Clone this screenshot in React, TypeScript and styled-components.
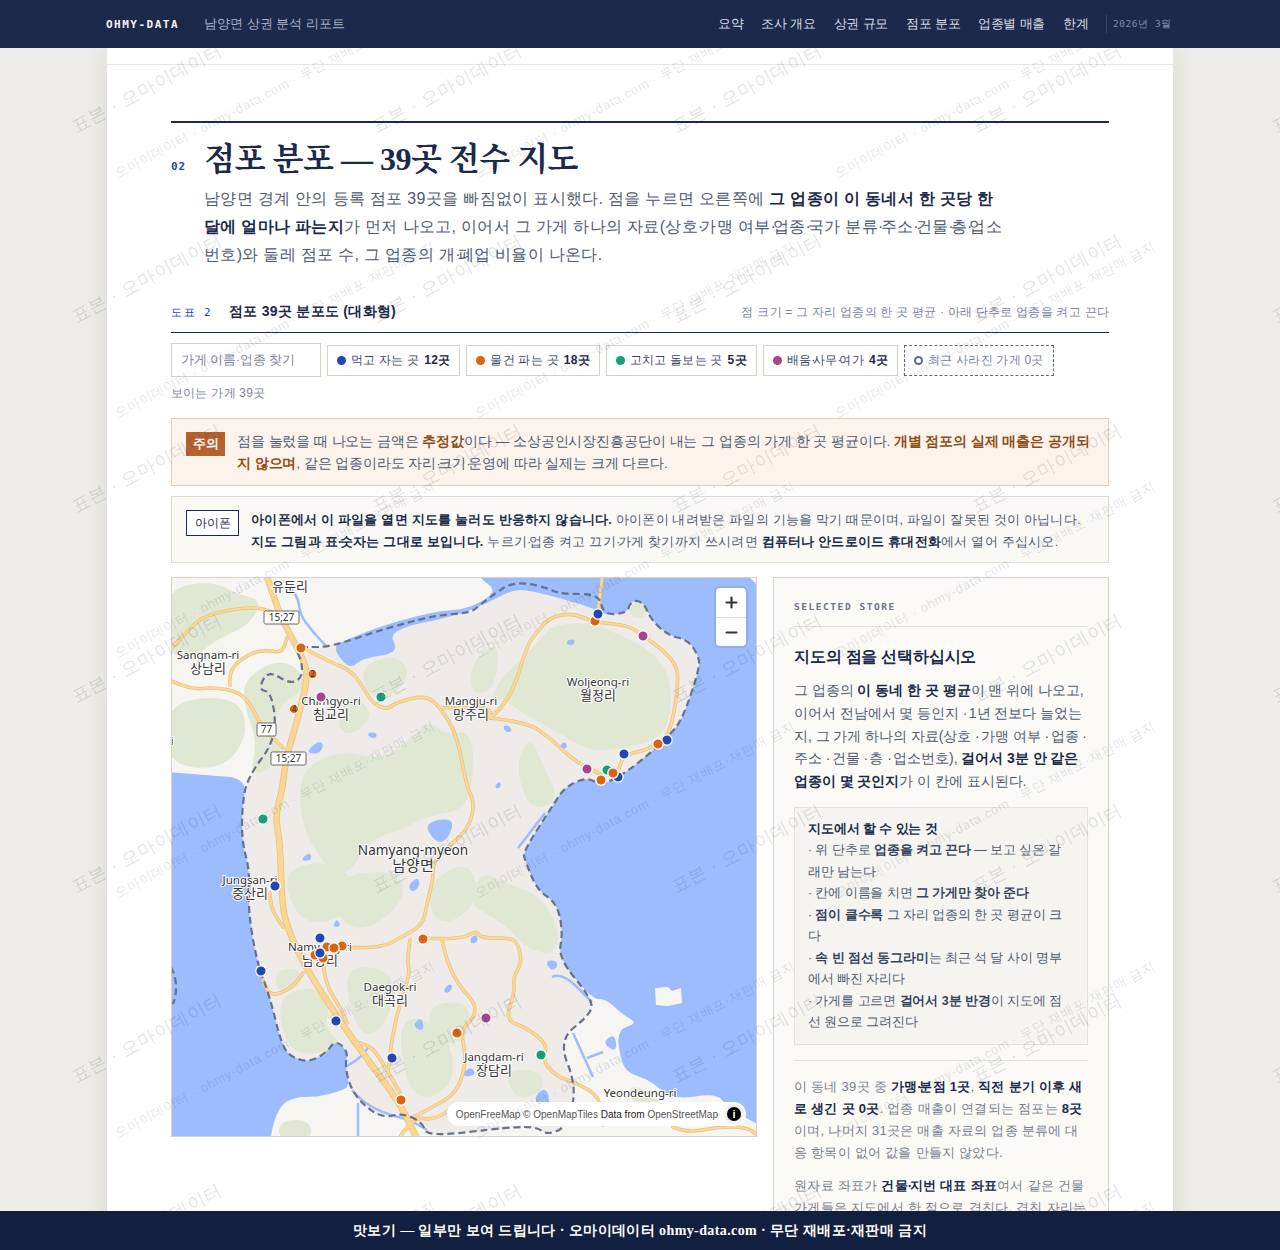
import React from "react";
import styled, { createGlobalStyle } from "styled-components";
import { Minus, Plus } from "lucide-react";

const SANS = `"Liberation Sans", sans-serif`;
const TITLE_SERIF = `"Liberation Serif", "Noto Serif CJK KR", serif`;
const SERIF = `"Liberation Serif", serif`;
const MONO = `"DejaVu Sans Mono", monospace`;
const NAVY = "#1b2a4a";

const GlobalStyle = createGlobalStyle`
  html, body {
    margin: 0;
    height: 100%;
    overflow: hidden;
    background: #eeede8;
  }
  * { box-sizing: border-box; }
`;

const Page = styled.div`
  height: 100vh;
  display: flex;
  flex-direction: column;
  font-family: ${SANS};
  color: #4a5568;
`;

const TopBar = styled.header`
  flex: none;
  height: 48px;
  padding: 0 108px 0 106px;
  display: flex;
  align-items: center;
  justify-content: space-between;
  background: ${NAVY};
`;

const Brand = styled.div`
  display: flex;
  align-items: center;
  gap: 25px;
`;

const Logo = styled.span`
  font-family: ${MONO};
  font-size: 11px;
  font-weight: 700;
  letter-spacing: 1.5px;
  color: #f4f4f0;
`;

const ReportName = styled.span`
  font-size: 13px;
  color: #a9b2c3;
`;

const Nav = styled.nav`
  display: flex;
  align-items: center;
  gap: 17.5px;
`;

const NavLink = styled.a`
  font-size: 13px;
  letter-spacing: -0.2px;
  color: #d9dde5;
`;

const IssueDate = styled.span`
  padding-left: 6px;
  height: 18px;
  line-height: 18px;
  border-left: 1px solid #3a4867;
  font-family: ${MONO};
  font-size: 9.5px;
  letter-spacing: 0.6px;
  color: #7f8ba3;
`;

const BottomBar = styled.footer`
  flex: none;
  height: 39px;
  display: flex;
  align-items: center;
  justify-content: center;
  background: #12203f;
  color: #fff;
  font-family: ${SERIF};
  font-size: 14px;
  letter-spacing: 0.4px;
  font-weight: 700;
`;

const Main = styled.main`
  flex: 1;
  min-height: 0;
  position: relative;
  overflow: hidden;
`;

const Sheet = styled.div`
  width: 1066px;
  margin: 0 auto;
  background: #fff;
  box-shadow: 0 0 24px rgba(30, 30, 20, 0.1);
`;

const PrevSectionEnd = styled.div`
  height: 17px;
  border-bottom: 1px solid #e8e4dc;
`;

const Section = styled.section`
  margin: 56px 64px 0;
  padding-top: 14px;
  border-top: 2px solid ${NAVY};
`;

const SectionHead = styled.div`
  display: flex;
  align-items: baseline;
  gap: 18px;
`;

const SectionNo = styled.span`
  font-family: ${MONO};
  font-size: 11px;
  font-weight: 700;
  letter-spacing: 1px;
  color: #2148b0;
`;

const Title = styled.h2`
  margin: 0;
  font-family: ${TITLE_SERIF};
  font-size: 32px;
  letter-spacing: -0.5px;
  line-height: 44px;
  font-weight: 700;
  color: ${NAVY};
`;

const Lead = styled.p`
  margin: 4px 0 0 33px;
  max-width: 800px;
  font-size: 16px;
  letter-spacing: 0.02em;
  line-height: 28px;
  color: #4f5a70;

  strong {
    color: ${NAVY};
  }
`;

// the middle dot sets narrower than Liberation Sans gives it
const Mid = styled.span`
  letter-spacing: -0.18em;
`;

const dotted = (s: string) =>
  s.split("·").map((part, i) => (
    <React.Fragment key={i}>
      {i > 0 && <Mid>·</Mid>}
      {part}
    </React.Fragment>
  ));

const FigureHead = styled.div`
  margin-top: 34px;
  padding-bottom: 11px;
  display: flex;
  align-items: baseline;
  border-bottom: 1px solid ${NAVY};
`;

const FigureNo = styled.span`
  width: 58px;
  font-family: ${MONO};
  font-size: 11px;
  letter-spacing: 1.5px;
  color: #2148b0;
`;

const FigureTitle = styled.span`
  font-size: 14px;
  letter-spacing: 0.02em;
  font-weight: 700;
  color: ${NAVY};
`;

const FigureNote = styled.span`
  margin-left: auto;
  font-size: 12px;
  letter-spacing: 0.02em;
  color: #7a8396;
`;

const Controls = styled.div`
  margin-top: 10px;
  display: flex;
  align-items: center;
  gap: 6px;
`;

const SearchBox = styled.input`
  width: 150px;
  height: 34px;
  padding: 0 9px;
  border: 1px solid #d8d2c6;
  background: #fff;
  font-family: ${SANS};
  font-size: 12.5px;
  letter-spacing: -0.15px;

  &::placeholder {
    color: #7c8494;
    opacity: 1;
  }
`;

const Chip = styled.button<{ $gone?: boolean }>`
  height: 31px;
  padding: 0 9px;
  display: flex;
  align-items: center;
  gap: 5px;
  border: 1px ${(p) => (p.$gone ? "dashed #5e6a80" : "solid #d8d2c6")};
  background: #fff;
  font-family: ${SANS};
  font-size: 12px;
  letter-spacing: 0.02em;
  color: ${(p) => (p.$gone ? "#7a8396" : "#3a4660")};

  strong {
    margin-left: 1.4px;
    color: ${NAVY};
  }
`;

const ChipLabel = styled.span`
  white-space: nowrap;
`;

const Dot = styled.i<{ $color: string }>`
  width: 9px;
  height: 9px;
  border-radius: 50%;
  background: ${(p) => p.$color};
`;

const HollowDot = styled.i`
  width: 9px;
  height: 9px;
  border-radius: 50%;
  border: 2px solid #5e6a80;
`;

const VisibleCount = styled.div`
  margin-top: 8px;
  font-size: 12px;
  letter-spacing: 0.02em;
  line-height: 16px;
  color: #7a8396;
`;

const Notice = styled.div<{ $warn?: boolean }>`
  margin-top: ${(p) => (p.$warn ? "17px" : "10px")};
  padding: ${(p) => (p.$warn ? "12px 14px 10px" : "12px 14px 9px")};
  display: flex;
  align-items: flex-start;
  gap: 12px;
  border: 1px solid ${(p) => (p.$warn ? "#e6cdb4" : "#e0dcd2")};
  background: ${(p) => (p.$warn ? "#fbf3ec" : "#faf9f6")};
`;

const NoticeBadge = styled.span<{ $warn?: boolean }>`
  flex: none;
  margin-top: 1px;
  height: ${(p) => (p.$warn ? "24px" : "26px")};
  padding: 0 ${(p) => (p.$warn ? "6.5px" : "7.5px")};
  display: flex;
  align-items: center;
  font-size: ${(p) => (p.$warn ? "13px" : "12px")};
  font-weight: ${(p) => (p.$warn ? 700 : 400)};
  border: ${(p) => (p.$warn ? "none" : `1px solid ${NAVY}`)};
  background: ${(p) => (p.$warn ? "#b5622c" : "#fff")};
  color: ${(p) => (p.$warn ? "#fff" : NAVY)};
`;

const NoticeText = styled.p<{ $warn?: boolean }>`
  margin: 0;
  font-size: ${(p) => (p.$warn ? "13.5px" : "12.5px")};
  letter-spacing: ${(p) => (p.$warn ? "-0.08px" : "0.02em")};
  line-height: 22px;
  color: #4f5a70;

  strong {
    color: ${(p) => (p.$warn ? "#8f4d16" : NAVY)};
  }
`;

const Columns = styled.div`
  margin-top: 14px;
  display: grid;
  grid-template-columns: 586px 336px;
  gap: 16px;
  align-items: start;
`;

const MapFrame = styled.div`
  position: relative;
  height: 560px;
  border: 1px solid #d8d2c6;
  overflow: hidden;
  background: #f7f5f1;

  svg {
    display: block;
  }
`;

const ZoomControl = styled.div`
  position: absolute;
  top: 10px;
  right: 10px;
  width: 30px;
  display: flex;
  flex-direction: column;
  border-radius: 4px;
  background: #fff;
  box-shadow: 0 0 0 2px rgba(0, 0, 0, 0.08);
`;

const ZoomButton = styled.button`
  height: 29px;
  padding: 0;
  display: flex;
  align-items: center;
  justify-content: center;
  border: none;
  background: none;
  color: #333;

  & + & {
    border-top: 1px solid #ddd;
  }
`;

const Attribution = styled.div`
  position: absolute;
  right: 10px;
  bottom: 10px;
  height: 24px;
  padding: 0 2px 0 9px;
  display: flex;
  align-items: center;
  gap: 6px;
  border-radius: 12px;
  background: #fff;
  font-family: "Liberation Sans", sans-serif;
  font-size: 10px;
  color: #222;

  span {
    color: #555;
  }
`;

const InfoButton = styled.b`
  width: 20px;
  height: 20px;
  display: flex;
  align-items: center;
  justify-content: center;
  border-radius: 50%;
  background: #f1f1f1;

  &::before {
    content: "i";
    width: 14px;
    height: 14px;
    border-radius: 50%;
    background: #000;
    color: #fff;
    font: 700 11px/14px "Liberation Sans", sans-serif;
    text-align: center;
  }
`;

const SidePanel = styled.aside`
  height: 680px;
  padding: 21px 20px 0;
  border: 1px solid #d8d2c6;
  background: #fbfaf7;
`;

const PanelLabel = styled.div`
  padding-bottom: 11px;
  border-bottom: 1px solid #e5e1d8;
  font-family: ${MONO};
  font-size: 9.5px;
  font-weight: 700;
  line-height: 16px;
  letter-spacing: 1.55px;
  color: #6b7488;
`;

const PanelTitle = styled.h3`
  margin: 18px 0 0;
  font-size: 16px;
  letter-spacing: -0.2px;
  line-height: 24px;
  font-weight: 700;
  color: ${NAVY};
`;

const PanelText = styled.p`
  margin: 10px 0 0;
  font-size: 14px;
  letter-spacing: -0.05px;
  line-height: 22.8px;
  color: #4f5a70;

  strong {
    color: ${NAVY};
  }
`;

const HelpBox = styled.div`
  margin-top: 14px;
  padding: 11px 13px 10px;
  border: 1px solid #e5e2da;
  background: #f5f4f0;
  font-size: 12.5px;
  letter-spacing: -0.1px;
  line-height: 21.5px;
  color: #4f5a70;

  strong {
    color: #36425c;
  }
`;

const HelpTitle = styled.strong`
  display: block;
  color: ${NAVY} !important;
`;

const HelpLine = styled.div``;

const StatsNote = styled.div`
  margin-top: 15px;
  padding-top: 15px;
  border-top: 1px solid #e5e1d8;
  font-size: 13px;
  letter-spacing: 0.02em;
  line-height: 22px;
  color: #767d8c;

  p {
    margin: 0 0 11px;
  }

  strong {
    color: ${NAVY};
  }
`;

const WatermarkLayer = styled.div<{ $cols: number; $cellW: number; $cellH: number; $left: number; $top: number }>`
  position: absolute;
  top: ${(p) => p.$top}px;
  left: ${(p) => p.$left}px;
  display: grid;
  grid-template-columns: repeat(${(p) => p.$cols}, ${(p) => p.$cellW}px);
  grid-auto-rows: ${(p) => p.$cellH}px;
  pointer-events: none;
`;

const Stamp = styled.span<{ $big?: boolean }>`
  display: flex;
  align-items: center;
  justify-content: center;
  white-space: nowrap;
  transform: rotate(-28deg);
  font-size: ${(p) => (p.$big ? "18px" : "13px")};
  letter-spacing: ${(p) => (p.$big ? "0.7px" : "0.75px")};
  color: rgba(27, 42, 74, 0.14);
`;

type Pt = [number, number];

// quadratic through midpoints, so the hand-traced points come out as curves
const curve = (pts: Pt[], closed = false) => {
  const mid = (a: Pt, b: Pt): Pt => [(a[0] + b[0]) / 2, (a[1] + b[1]) / 2];
  if (closed) {
    const s = mid(pts[pts.length - 1], pts[0]);
    let d = `M${s[0]} ${s[1]}`;
    pts.forEach((p, i) => {
      const m = mid(p, pts[(i + 1) % pts.length]);
      d += `Q${p[0]} ${p[1]} ${m[0]} ${m[1]}`;
    });
    return d + "Z";
  }
  let d = `M${pts[0][0]} ${pts[0][1]}`;
  for (let i = 1; i < pts.length - 1; i++) {
    const m = mid(pts[i], pts[i + 1]);
    d += `Q${pts[i][0]} ${pts[i][1]} ${m[0]} ${m[1]}`;
  }
  const last = pts[pts.length - 1];
  return d + `L${last[0]} ${last[1]}`;
};

const westCoast: Pt[] = [
  [247, 778], [242, 808], [242, 842], [250, 872], [248, 910], [257, 963], [270, 997], [282, 1047],
  [293, 1058], [310, 1062], [327, 1052], [333, 1043], [340, 1043], [348, 1053], [345, 1065], [350, 1087],
];

const eastCoast: Pt[] = [
  [603, 615], [627, 613], [630, 603], [637, 600], [645, 605], [650, 618], [667, 635], [688, 640],
  [698, 655], [700, 667], [683, 718], [670, 735], [640, 762], [617, 778], [600, 785], [587, 777],
  [565, 787], [553, 805], [523, 852], [525, 860], [537, 890], [557, 903], [563, 933], [558, 958], [593, 1000],
];

const districtLand: Pt[] = [
  [307, 647], [330, 647], [387, 628], [437, 615], [470, 613], [480, 605], [497, 592], [510, 584],
  [527, 583], [547, 588], [560, 594], [600, 594], ...eastCoast,
  [590, 1015], [558, 1040], [577, 1087], [567, 1127], [547, 1135], [537, 1127], [510, 1127], [427, 1137],
  [423, 1123], [403, 1113], [383, 1118], [363, 1105], ...[...westCoast].reverse(),
  [277, 738], [272, 692], [258, 690], [268, 670], [290, 684], [302, 678], [302, 662], [295, 647],
];

const westSea: Pt[] = [
  [130, 772], [171, 772], [203, 775], ...westCoast,
  [337, 1092], [317, 1097], [293, 1097], [278, 1108], [270, 1137], [262, 1190], [130, 1190],
];

const eastSea: Pt[] = [
  [470, 540], [477, 577], [497, 590], [480, 603], [460, 610], [437, 611], [387, 624], [345, 640], [332, 648],
  [350, 670], [362, 658], [400, 653], [387, 630], [460, 615], [493, 600], [513, 590], [527, 590],
  [560, 598], [593, 608], ...eastCoast,
  [605, 998], [623, 1015], [638, 1023], [617, 1030], [620, 1057], [627, 1073], [650, 1080], [673, 1100],
  [717, 1093], [727, 1107], [755, 1123], [790, 1140], [810, 1000], [810, 540],
];

const forests: Pt[][] = [
  [[540, 640], [552, 625], [590, 622], [620, 635], [650, 650], [668, 672], [672, 700], [668, 725], [655, 740], [625, 748], [595, 752], [570, 740], [545, 725], [525, 715], [505, 700], [490, 700], [500, 680], [525, 655]],
  [[515, 765], [530, 735], [545, 770], [560, 800], [530, 812]],
  [[165, 590], [210, 580], [240, 595], [262, 600], [250, 625], [215, 640], [190, 662], [165, 650]],
  [[165, 702], [235, 695], [250, 730], [225, 770], [165, 765]],
  [[243, 680], [275, 660], [300, 668], [305, 690], [282, 702], [272, 730], [283, 750], [270, 770], [250, 775], [257, 740], [245, 710]],
  [[362, 665], [395, 655], [410, 670], [400, 690], [380, 700], [365, 690]],
  [[300, 770], [340, 750], [380, 760], [410, 740], [430, 720], [445, 735], [470, 730], [475, 770], [465, 810], [430, 815], [400, 830], [370, 840], [345, 880], [320, 860], [300, 820]],
  [[345, 690], [375, 712], [355, 735], [336, 730]],
  [[282, 870], [330, 860], [355, 880], [355, 910], [320, 925], [295, 915]],
  [[335, 875], [400, 870], [405, 900], [370, 930], [340, 925]],
  [[274, 970], [300, 968], [303, 985], [278, 995]],
  [[277, 998], [310, 985], [330, 1000], [325, 1030], [345, 1045], [310, 1057], [285, 1045]],
  [[345, 965], [395, 970], [390, 1020], [365, 1040], [350, 1010]],
  [[400, 1025], [420, 1015], [450, 1040], [455, 1080], [430, 1100], [410, 1090], [402, 1060]],
  [[425, 1005], [470, 1000], [470, 1040], [435, 1045]],
  [[480, 870], [510, 885], [540, 895], [560, 930], [555, 955], [530, 950], [510, 930], [490, 915], [470, 905]],
  [[430, 880], [470, 860], [480, 900], [450, 925], [430, 915]],
  [[508, 1070], [540, 1070], [545, 1090], [520, 1100], [508, 1085]],
  [[625, 1085], [650, 1090], [665, 1110], [640, 1115]],
  [[280, 1120], [310, 1120], [312, 1140], [278, 1140]],
  [[630, 605], [642, 600], [648, 617], [630, 618]],
  [[472, 660], [500, 640], [495, 690], [470, 695]],
];

const lakes: Pt[][] = [
  [[308, 750], [318, 741], [324, 744], [320, 753], [310, 754]],
  [[423, 823], [455, 817], [448, 840], [436, 843]],
  [[567, 640], [575, 639], [574, 645], [567, 645]],
  [[503, 725], [510, 726], [512, 732], [505, 732]],
  [[560, 745], [565, 741], [568, 748], [561, 749]],
  [[495, 785], [500, 781], [501, 787], [496, 789]],
  [[367, 733], [376, 732], [377, 738], [370, 738]],
  [[302, 858], [310, 852], [312, 860], [303, 861]],
  [[333, 925], [337, 919], [341, 926], [335, 927]],
  [[408, 885], [418, 877], [420, 886], [412, 893]],
  [[443, 990], [450, 983], [453, 988], [447, 994]],
  [[413, 1024], [422, 1017], [424, 1030], [418, 1030]],
  [[545, 961], [556, 960], [558, 967], [551, 971]],
  [[463, 1072], [472, 1067], [476, 1075], [464, 1077]],
  [[535, 1095], [546, 1087], [551, 1105], [537, 1108]],
  [[470, 938], [477, 934], [478, 942], [471, 944]],
  [[602, 1043], [615, 1033], [617, 1053]],
];

const rivers: Pt[][] = [
  [[287, 585], [298, 595], [300, 615], [313, 632], [327, 647]],
  [[573, 1033], [593, 1077]],
  [[587, 1058], [603, 1052]],
  [[552, 977], [562, 972], [592, 1002]],
  [[345, 1067], [358, 1060], [368, 1048]],
  [[352, 1090], [360, 1100], [383, 1113], [410, 1120], [427, 1130]],
  [[358, 1103], [358, 1140]],
  [[518, 848], [545, 813]],
];

const highways: Pt[][] = [
  [[265, 570], [277, 608], [290, 635], [303, 658], [308, 678], [298, 718], [285, 762], [283, 788], [275, 815], [280, 842], [282, 903], [287, 927], [303, 963], [337, 1017], [370, 1063], [400, 1103], [420, 1145]],
];

const roads: Pt[][] = [
  [[165, 678], [190, 690], [213, 687], [240, 692], [253, 708], [260, 725], [283, 748]],
  [[230, 685], [228, 670], [250, 653], [267, 650], [282, 653], [287, 638]],
  [[165, 655], [190, 628], [203, 617], [227, 610], [257, 607], [272, 612]],
  [[307, 650], [330, 662], [350, 670], [362, 685], [372, 703], [387, 710], [397, 702], [427, 695], [442, 710], [457, 735], [467, 788], [473, 798], [473, 815], [465, 832], [450, 845], [433, 862], [433, 880], [427, 903], [423, 925], [400, 938], [383, 947], [350, 948], [330, 945]],
  [[410, 940], [407, 960], [410, 973], [400, 1003], [392, 1037], [388, 1073]],
  [[423, 938], [460, 940], [477, 930], [480, 938], [510, 938], [518, 943], [522, 963], [513, 977], [515, 992], [505, 1020], [527, 1028], [548, 1045], [542, 1060], [557, 1077], [577, 1083], [600, 1097], [603, 1125]],
  [[442, 940], [447, 963], [460, 987], [475, 1003], [475, 1017], [460, 1030], [467, 1060], [457, 1093], [433, 1107], [413, 1117]],
  [[490, 718], [510, 702], [527, 645], [537, 632], [550, 617], [573, 613], [593, 622], [627, 625], [643, 635], [677, 662], [678, 688], [673, 718], [667, 738], [647, 750], [623, 755], [618, 772]],
  [[490, 718], [527, 722], [550, 738], [570, 757], [587, 768], [603, 775]],
  [[603, 570], [598, 612]],
  [[442, 708], [460, 707], [490, 707], [490, 718]],
  [[323, 963], [325, 983], [340, 1007], [347, 1023]],
  [[353, 1042], [370, 1043], [387, 1070], [400, 1093]],
  [[303, 973], [293, 988], [270, 997], [263, 980]],
  [[270, 893], [270, 907], [283, 927]],
  [[673, 1127], [687, 1133], [717, 1127], [747, 1127], [760, 1137]],
  [[400, 1137], [413, 1117], [433, 1120], [450, 1110]],
];

const placeLabels: { x: number; y: number; en: string; ko?: string; big?: boolean }[] = [
  { x: 290, y: 591, en: "유둔리" },
  { x: 208, y: 659, en: "Sangnam-ri", ko: "상남리" },
  { x: 331, y: 705, en: "Chimgyo-ri", ko: "침교리" },
  { x: 471, y: 705, en: "Mangju-ri", ko: "망주리" },
  { x: 598, y: 686, en: "Woljeong-ri", ko: "월정리" },
  { x: 413, y: 855, en: "Namyang-myeon", ko: "남양면", big: true },
  { x: 250, y: 884, en: "Jungsan-ri", ko: "중산리" },
  { x: 320, y: 951, en: "Namyang-ri", ko: "남양리" },
  { x: 390, y: 991, en: "Daegok-ri", ko: "대곡리" },
  { x: 494, y: 1061, en: "Jangdam-ri", ko: "장담리" },
  { x: 640, y: 1097, en: "Yeondeung-ri" },
  { x: 172, y: 745, en: "i" },
];

const shields: { x: number; y: number; w: number; label: string }[] = [
  { x: 264, y: 611, w: 35, label: "15;27" },
  { x: 257, y: 723, w: 19, label: "77" },
  { x: 271, y: 752, w: 35, label: "15;27" },
];

const EAT = "#2148b0";
const SHOP = "#dc640e";
const FIX = "#14a078";
const LEARN = "#a5468c";

const pins: { x: number; y: number; c: string }[] = [
  { x: 301, y: 648, c: SHOP }, { x: 321, y: 697, c: LEARN }, { x: 381, y: 697, c: FIX }, { x: 263, y: 819, c: FIX },
  { x: 595, y: 621, c: SHOP }, { x: 598, y: 614, c: EAT }, { x: 643, y: 636, c: LEARN }, { x: 667, y: 740, c: EAT },
  { x: 658, y: 744, c: SHOP }, { x: 624, y: 754, c: EAT }, { x: 587, y: 769, c: LEARN }, { x: 607, y: 770, c: FIX },
  { x: 618, y: 777, c: EAT }, { x: 613, y: 773, c: SHOP }, { x: 601, y: 780, c: SHOP }, { x: 275, y: 886, c: EAT },
  { x: 320, y: 938, c: EAT }, { x: 327, y: 947, c: SHOP }, { x: 342, y: 946, c: SHOP }, { x: 334, y: 948, c: SHOP },
  { x: 315, y: 955, c: SHOP }, { x: 323, y: 958, c: SHOP }, { x: 320, y: 953, c: EAT }, { x: 261, y: 971, c: EAT },
  { x: 423, y: 939, c: SHOP }, { x: 336, y: 1021, c: EAT }, { x: 392, y: 1058, c: EAT }, { x: 401, y: 1100, c: SHOP },
  { x: 457, y: 1033, c: SHOP }, { x: 486, y: 1018, c: LEARN }, { x: 541, y: 1055, c: FIX },
];

const countPins = [
  { x: 312.5, y: 674, n: 2 },
  { x: 294, y: 709, n: 4 },
];

const BaseMap = () => (
  <svg width="584" height="558" viewBox="172 578 584 558">
    <path d={curve(districtLand, true)} fill="#eeebe8" />
    {forests.map((f, i) => (
      <path key={i} d={curve(f, true)} fill="#e0e8d4" />
    ))}
    <path d="M165 972 L177 972 L180 990 L175 1003 L165 1003Z" fill="#f3f1ea" />
    <path d={curve(westSea, true)} fill="#9cbcfd" />
    <path d={curve(eastSea, true)} fill="#9cbcfd" />
    <path d="M655 988 L668 987 L672 991 L681 988 L682 1003 L668 1006 L656 1005Z" fill="#f7f5f1" />
    {lakes.map((l, i) => (
      <path key={i} d={curve(l, true)} fill="#9cbcfd" />
    ))}
    {rivers.map((r, i) => (
      <path key={i} d={curve(r)} fill="none" stroke="#9cbcfd" strokeWidth="2.5" />
    ))}
    {roads.map((r, i) => (
      <path key={i} d={curve(r)} fill="none" stroke="#ecc07e" strokeWidth="3.6" strokeLinecap="round" />
    ))}
    {highways.map((r, i) => (
      <path key={i} d={curve(r)} fill="none" stroke="#ecc07e" strokeWidth="6.5" />
    ))}
    {roads.map((r, i) => (
      <path key={i} d={curve(r)} fill="none" stroke="#fad896" strokeWidth="2.2" strokeLinecap="round" />
    ))}
    {highways.map((r, i) => (
      <path key={i} d={curve(r)} fill="none" stroke="#f9d792" strokeWidth="5" />
    ))}
    <path
      d={curve(districtLand, true)}
      fill="none"
      stroke="#66728c"
      strokeWidth="2.2"
      strokeDasharray="7 4"
    />
    <path d="M171 967 Q180 985 173 1004" fill="none" stroke="#66728c" strokeWidth="2.2" strokeDasharray="7 4" />
    {shields.map((s) => (
      <g key={s.y}>
        <rect x={s.x} y={s.y} width={s.w} height="13" rx="1.5" fill="#fff" stroke="#444" strokeWidth="0.8" />
        <text x={s.x + s.w / 2} y={s.y + 10} textAnchor="middle" fontFamily="Noto Sans, sans-serif" fontSize="10" fill="#333">
          {s.label}
        </text>
      </g>
    ))}
    {placeLabels.map((l) => (
      <text
        key={l.en}
        textAnchor="middle"
        fontFamily="Noto Sans, Noto Sans CJK KR, sans-serif"
        fontSize={l.big ? 13.6 : 11.5}
        fill="#333"
        stroke="#fff"
        strokeWidth="2"
        paintOrder="stroke"
      >
        <tspan x={l.x} y={l.y} fontSize={!l.ko && /[가-힣]/.test(l.en) ? 13 : undefined}>{l.en}</tspan>
        {l.ko && <tspan x={l.x} dy={l.big ? 16 : 14} fontSize={l.big ? 15 : 13}>{l.ko}</tspan>}
      </text>
    ))}
    {pins.map((p, i) => (
      <circle key={i} cx={p.x} cy={p.y} r="5.2" fill={p.c} stroke="#fff" strokeWidth="1.3" />
    ))}
    {countPins.map((p) => (
      <g key={p.n}>
        <circle cx={p.x} cy={p.y} r="4.5" fill={SHOP} stroke="#fff" strokeWidth="1" />
        <text x={p.x} y={p.y + 3} textAnchor="middle" fontFamily="Noto Sans, sans-serif" fontSize="8" fill="#333">
          {p.n}
        </text>
      </g>
    ))}
  </svg>
);

const chips = [
  { color: EAT, label: "먹고 자는 곳", count: "12곳" },
  { color: SHOP, label: "물건 파는 곳", count: "18곳" },
  { color: FIX, label: "고치고 돌보는 곳", count: "5곳" },
  { color: LEARN, label: "배움·사무·여가", count: "4곳" },
];

const navItems = ["요약", "조사 개요", "상권 규모", "점포 분포", "업종별 매출", "한계"];

const Watermarks = () => (
  <>
    <WatermarkLayer $cols={5} $cellW={300} $cellH={190} $left={-3} $top={-55}>
      {Array.from({ length: 35 }, (_, i) => (
        <Stamp key={i} $big>표본 · 오마이데이터</Stamp>
      ))}
    </WatermarkLayer>
    <WatermarkLayer $cols={3} $cellW={360} $cellH={240} $left={95} $top={-78}>
      {Array.from({ length: 18 }, (_, i) => (
        <Stamp key={i}>오마이데이터 · ohmy-data.com · 무단 재배포·재판매 금지</Stamp>
      ))}
    </WatermarkLayer>
  </>
);

const App = () => (
  <Page>
    <GlobalStyle />
    <TopBar>
      <Brand>
        <Logo>OHMY-DATA</Logo>
        <ReportName>남양면 상권 분석 리포트</ReportName>
      </Brand>
      <Nav>
        {navItems.map((n) => (
          <NavLink key={n}>{n}</NavLink>
        ))}
        <IssueDate>2026년 3월</IssueDate>
      </Nav>
    </TopBar>

    <Main>
      <Sheet>
        <PrevSectionEnd />
        <Section>
          <SectionHead>
            <SectionNo>02</SectionNo>
            <Title>점포 분포 — 39곳 전수 지도</Title>
          </SectionHead>
          <Lead>
            남양면 경계 안의 등록 점포 39곳을 빠짐없이 표시했다. 점을 누르면 오른쪽에{" "}
            <strong>그 업종이 이 동네서 한 곳당 한 달에 얼마나 파는지</strong>가 먼저 나오고, 이어서 그 가게 하나의{" "}
            {dotted("자료(상호·가맹 여부·업종·국가 분류·주소·건물·층·업소번호)와 둘레 점포 수, 그 업종의 개·폐업 비율이 나온다.")}
          </Lead>

          <FigureHead>
            <FigureNo>도표 2</FigureNo>
            <FigureTitle>점포 39곳 분포도 (대화형)</FigureTitle>
            <FigureNote>점 크기 = 그 자리 업종의 한 곳 평균 · 아래 단추로 업종을 켜고 끈다</FigureNote>
          </FigureHead>

          <Controls>
            <SearchBox placeholder="가게 이름·업종 찾기" />
            {chips.map((c) => (
              <Chip key={c.label}>
                <Dot $color={c.color} />
                <ChipLabel>
                  {dotted(c.label)} <strong>{c.count}</strong>
                </ChipLabel>
              </Chip>
            ))}
            <Chip $gone>
              <HollowDot />
              최근 사라진 가게 0곳
            </Chip>
          </Controls>
          <VisibleCount>보이는 가게 39곳</VisibleCount>

          <Notice $warn>
            <NoticeBadge $warn>주의</NoticeBadge>
            <NoticeText $warn>
              점을 눌렀을 때 나오는 금액은 <strong>추정값</strong>이다 — 소상공인시장진흥공단이 내는 그 업종의 가게 한 곳
              평균이다. <strong>개별 점포의 실제 매출은 공개되지 않으며</strong>, 같은 업종이라도{" "}
              {dotted("자리·크기·운영에")} 따라 실제는 크게 다르다.
            </NoticeText>
          </Notice>
          <Notice>
            <NoticeBadge>아이폰</NoticeBadge>
            <NoticeText>
              <strong>아이폰에서 이 파일을 열면 지도를 눌러도 반응하지 않습니다.</strong> 아이폰이 내려받은 파일의 기능을
              막기 때문이며, 파일이 잘못된 것이 아닙니다. <strong>{dotted("지도 그림과 표·숫자는 그대로 보입니다.")}</strong>{" "}
              {dotted("누르기·업종 켜고 끄기·가게 찾기까지")} 쓰시려면 <strong>컴퓨터나 안드로이드 휴대전화</strong>에서 열어
              주십시오.
            </NoticeText>
          </Notice>

          <Columns>
            <MapFrame>
              <BaseMap />
              <ZoomControl>
                <ZoomButton><Plus size={17} strokeWidth={3} /></ZoomButton>
                <ZoomButton><Minus size={17} strokeWidth={3} /></ZoomButton>
              </ZoomControl>
              <Attribution>
                <div>
                  <span>OpenFreeMap © OpenMapTiles</span> Data from <span>OpenStreetMap</span>
                </div>
                <InfoButton />
              </Attribution>
            </MapFrame>

            <SidePanel>
              <PanelLabel>SELECTED STORE</PanelLabel>
              <PanelTitle>지도의 점을 선택하십시오</PanelTitle>
              <PanelText>
                그 업종의 <strong>이 동네 한 곳 평균</strong>이 맨 위에 나오고, 이어서 전남에서 몇 등인지{" "}
                {dotted("· 1년 전보다 늘었는지, 그 가게 하나의 자료(상호 · 가맹 여부 · 업종 · 주소 · 건물 · 층 · 업소번호),")}{" "}
                <strong>걸어서 3분 안 같은 업종이 몇 곳인지</strong>가 이 칸에 표시된다.
              </PanelText>
              <HelpBox>
                <HelpTitle>지도에서 할 수 있는 것</HelpTitle>
                <HelpLine>· 위 단추로 <strong>업종을 켜고 끈다</strong> — 보고 싶은 갈래만 남는다</HelpLine>
                <HelpLine>· 칸에 이름을 치면 <strong>그 가게만 찾아 준다</strong></HelpLine>
                <HelpLine>· <strong>점이 클수록</strong> 그 자리 업종의 한 곳 평균이 크다</HelpLine>
                <HelpLine>· <strong>속 빈 점선 동그라미</strong>는 최근 석 달 사이 명부에서 빠진 자리다</HelpLine>
                <HelpLine>· 가게를 고르면 <strong>걸어서 3분 반경</strong>이 지도에 점선 원으로 그려진다</HelpLine>
              </HelpBox>
              <StatsNote>
                <p>
                  이 동네 39곳 중 <strong>{dotted("가맹·분점 1곳")}</strong>, <strong>직전 분기 이후 새로 생긴 곳 0곳</strong>. 업종
                  매출이 연결되는 점포는 <strong>8곳</strong>이며, 나머지 31곳은 매출 자료의 업종 분류에 대응 항목이 없어
                  값을 만들지 않았다.
                </p>
                <p>
                  원자료 좌표가 <strong>{dotted("건물·지번 대표 좌표")}</strong>여서 같은 건물 가게들은 지도에서 한 점으로 겹친다. 겹친
                  자리는 숫자로 표시했다.
                </p>
              </StatsNote>
            </SidePanel>
          </Columns>
        </Section>
      </Sheet>
      <Watermarks />
    </Main>

    <BottomBar>맛보기 — 일부만 보여 드립니다 · 오마이데이터 ohmy-data.com · 무단 재배포·재판매 금지</BottomBar>
  </Page>
);

export default App;
